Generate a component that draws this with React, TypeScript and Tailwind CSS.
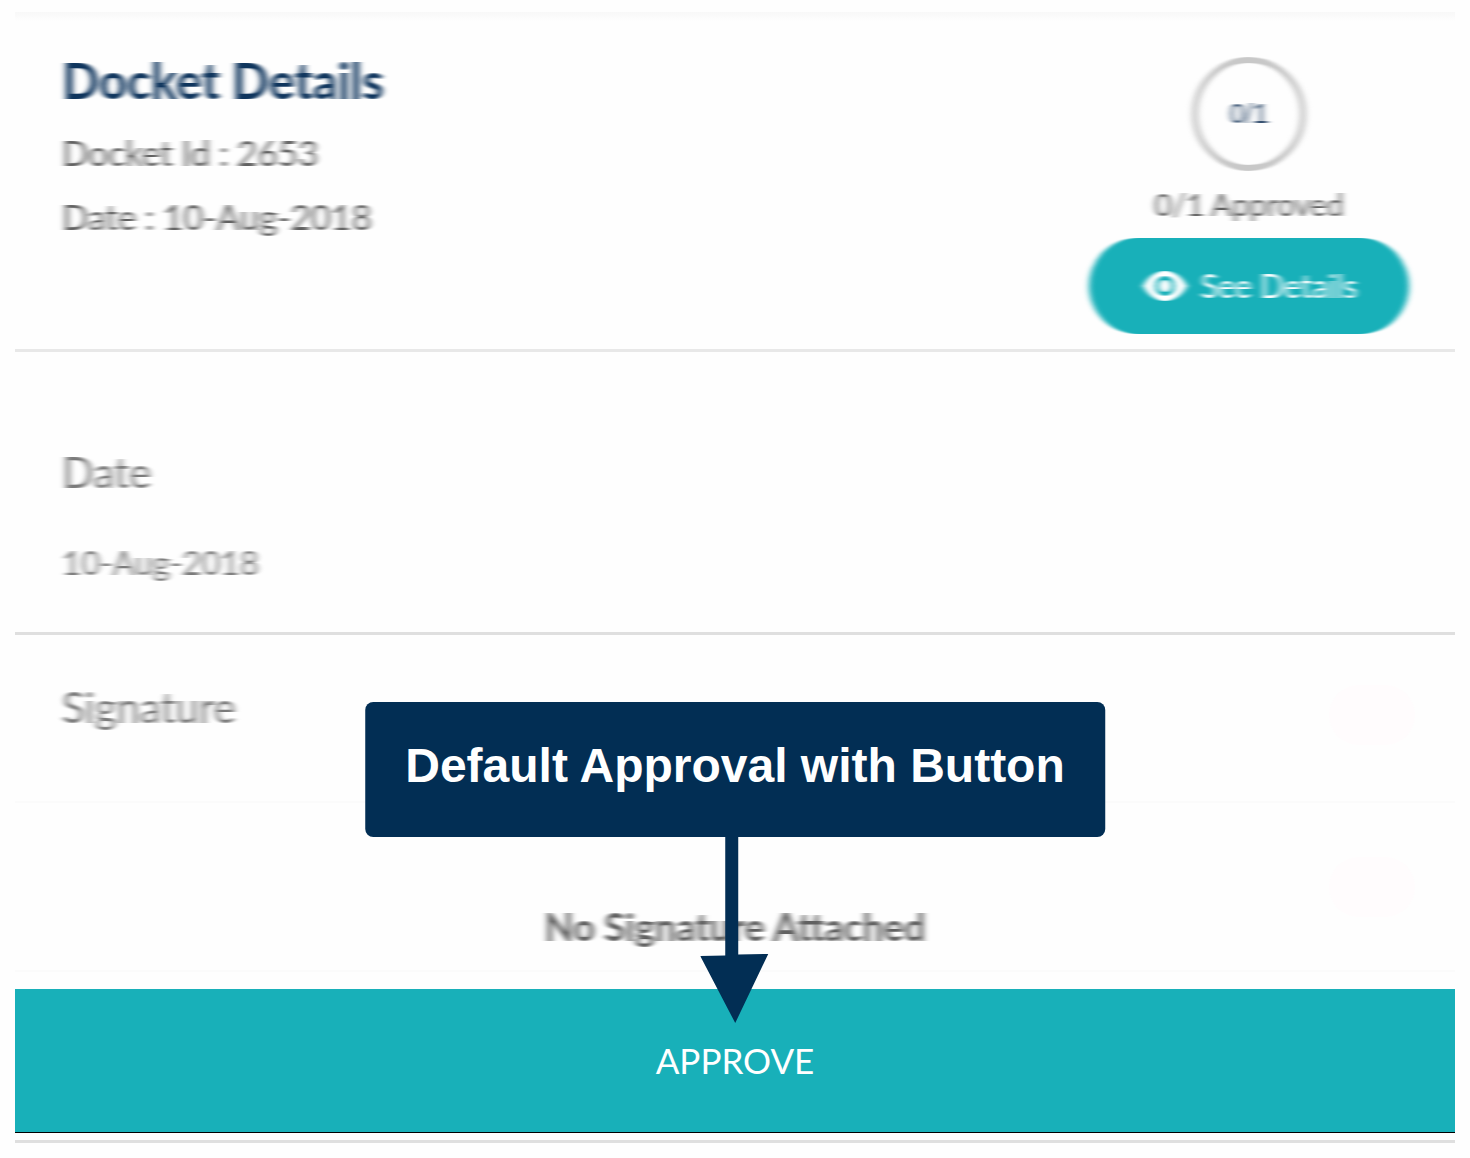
function EyeIcon() {
  return (
    <svg viewBox="0 0 48 34" className="h-[34px] w-12" aria-hidden="true">
      <path
        fill="currentColor"
        fillRule="evenodd"
        d="M24 2C14 2 6 9 2 17c4 8 12 15 22 15s18-7 22-15C42 9 34 2 24 2Zm0 25a10 10 0 1 1 0-20 10 10 0 0 1 0 20Zm0-4a6 6 0 1 0 0-12 6 6 0 0 0 0 12Z"
      />
    </svg>
  );
}

function SoftenFilter() {
  return (
    <svg className="absolute size-0" aria-hidden="true">
      <filter id="soften" x="-10%" width="120%" colorInterpolationFilters="sRGB">
        <feGaussianBlur stdDeviation="3.2 0" />
      </filter>
    </svg>
  );
}

function Callout() {
  return (
    <div className="absolute top-[67px] left-1/2 flex -translate-x-1/2 flex-col items-center">
      <div className="rounded-lg bg-[#022e54] px-10 pt-8 pb-[39px] font-['Liberation_Sans',sans-serif] text-[48px] leading-[64px] font-bold whitespace-nowrap text-white">
        Default Approval with Button
      </div>
      <svg viewBox="0 0 70 186" className="h-[186px] w-[70px]" aria-hidden="true">
        <path fill="#022e54" d="M25 0h13v117.600l30-.6-33 69L0 119l25-.6Z" />
      </svg>
    </div>
  );
}

export default function App() {
  return (
    <main className="bg-[#fefefe] px-[15px] pt-3 pb-[15px] font-['Lato',sans-serif] text-[#606060]">
      <SoftenFilter />
      <section className="flex items-start justify-between border-b-[3px] border-[#e8e8e8] bg-linear-to-b from-[#f8f8f8] to-[#fefefe] to-[9px] pr-[46px] pb-[15px] pl-[47px]">
        <div className="pt-10 [filter:url(#soften)]">
          <h1 className="text-[49px] leading-[56px] font-bold text-[#0f355d]">Docket Details</h1>
          <p className="pt-3 text-[35px] leading-[64px]">Docket Id : 2653</p>
          <p className="text-[35px] leading-[64px]">Date : 10-Aug-2018</p>
        </div>
        <div className="flex flex-col items-center pt-[45px]">
          <div className="flex size-[114px] items-center justify-center rounded-full border-[6px] border-[#c8c8c8] font-['Liberation_Sans',sans-serif] text-[28px] text-[#2c4869] [filter:url(#soften)]">
            0/1
          </div>
          <p className="pt-[13px] text-[31px] leading-10 [filter:url(#soften)]">0/1 Approved</p>
          <button
            type="button"
            className="mt-[14px] flex h-24 w-80 items-center justify-center gap-3 rounded-full bg-[#18b0b9] text-[32px] leading-10 text-white [filter:url(#soften)]"
          >
            <EyeIcon />
            See Details
          </button>
        </div>
      </section>

      <section className="border-b-[3px] border-[#dfdfdf] px-[47px] pt-[88px] pb-10">
        <h2 className="text-[42px] leading-[64px] text-[#7a7a7a] [filter:url(#soften)]">Date</h2>
        <p className="pt-7 text-[33px] leading-[60px] text-[#7a7a7a] [filter:url(#soften)]">10-Aug-2018</p>
      </section>

      <section className="relative">
        <div className="flex items-start justify-between border-b-2 border-[#fbfbfb] pt-10 pr-10 pb-14 pl-[47px]">
          <h2 className="text-[42px] leading-[64px] text-[#7a7a7a] [filter:url(#soften)]">Signature</h2>
          <span className="mt-[10px] h-[60px] w-[86px] rounded-full bg-[#fffcfd]" />
        </div>
        <div className="grid border-b-2 border-[#fbfbfb] pt-[54px] pb-5">
          <span className="col-start-1 row-start-1 mr-10 h-[60px] w-[86px] justify-self-end rounded-full bg-[#fffcfd]" />
          <p className="col-start-1 row-start-1 justify-self-center pt-[45px] text-[38px] leading-[48px] font-bold [filter:url(#soften)]">
            No Signature Attached
          </p>
        </div>
        <Callout />
      </section>

      <button
        type="button"
        className="mt-[17px] block h-36 w-full border-b border-black bg-[#18b0b9] text-[35px] text-white"
      >
        APPROVE
      </button>
      <hr className="mt-[7px] border-t-[3px] border-[#dfdfdf]" />
    </main>
  );
}
